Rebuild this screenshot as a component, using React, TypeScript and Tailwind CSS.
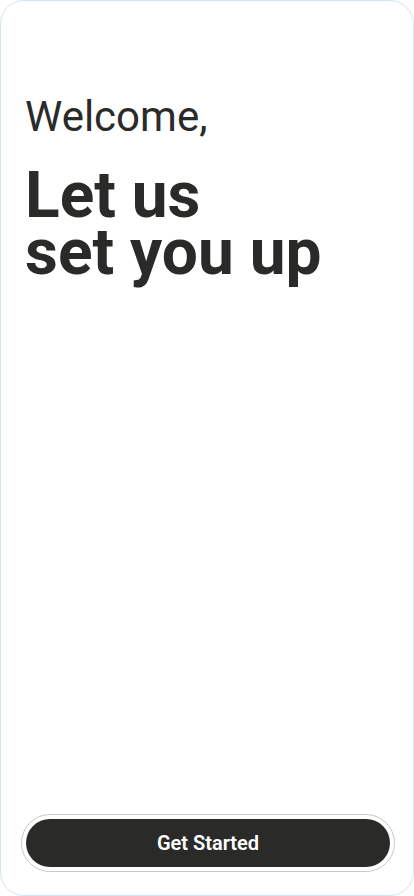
export default function App() {
  return (
    <div className="w-[414px] h-[896px] bg-white" style={{ fontFamily: "Roboto, 'Noto Sans', sans-serif" }}>
      <div className="h-full rounded-[24px] border border-[#d3e4f1] flex flex-col px-[24px] pb-[23px]">
        <div className="pt-[92px] text-[#2a2b29]">
          <div className="text-[42px] leading-[48px]">Welcome,</div>
          <div className="mt-[26px] text-[64px] font-bold leading-[57px]">
            Let us
            <br />
            set you up
          </div>
        </div>
        <div className="flex-1" />
        <div className="ml-[-4px] mr-[-6px] rounded-full border border-[#c9c9c9] px-[4px] py-[4px]">
          <button className="w-full h-[48px] rounded-full bg-[#2a2b29] text-white text-[20px] font-semibold">
            Get Started
          </button>
        </div>
      </div>
    </div>
  );
}
